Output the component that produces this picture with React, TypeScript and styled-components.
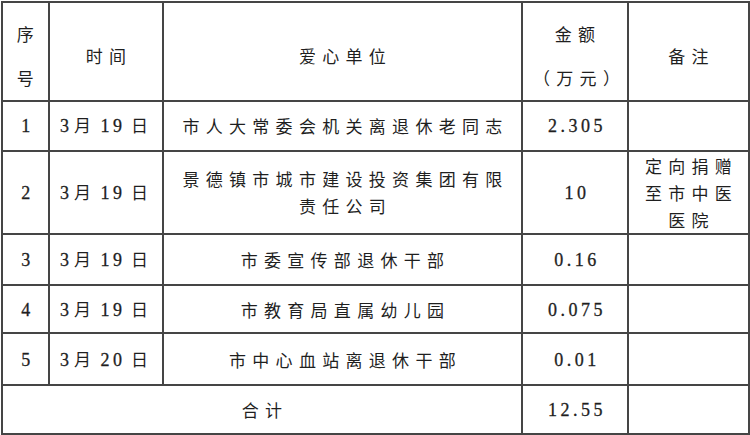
import styled, { createGlobalStyle } from "styled-components";

const GlobalStyle = createGlobalStyle`
  html, body {
    margin: 0;
    padding: 0;
    background: #fff;
  }
`;

const Page = styled.div`
  width: 750px;
  height: 435px;
  padding: 1px 0 0 1px;
  box-sizing: border-box;
  overflow: hidden;
`;

const Table = styled.table`
  border-collapse: collapse;
  table-layout: fixed;
  width: 747px;
  font-family: "Noto Sans CJK SC", sans-serif;
  font-size: 17px;
  color: #1f1f1f;
`;

const Row = styled.tr<{ $h: number }>`
  height: ${(p) => p.$h}px;
`;

const HeadCell = styled.th`
  border: 2px solid #454545;
  padding: 9px 4px 0 10px;
  font-weight: 400;
  line-height: 44px;
  letter-spacing: 6.3px;
  text-align: center;
  vertical-align: middle;
`;

const Cell = styled.td`
  border: 2px solid #454545;
  padding: 0 8px 0 14px;
  line-height: 27px;
  letter-spacing: 6.3px;
  text-align: center;
  vertical-align: middle;
`;

// цифры — засечный шрифт, чуть плотнее
const Num = styled.span<{ $ls?: number }>`
  font-family: "Liberation Serif", "DejaVu Serif", serif;
  font-size: 18px;
  letter-spacing: ${(p) => p.$ls ?? 3.5}px;
  -webkit-text-stroke: 0.3px #1f1f1f;
`;

const Han = styled.span<{ $ls: number }>`
  letter-spacing: ${(p) => p.$ls}px;
`;

const AmountCell = styled(Cell)`
  padding: 0 4px 0 8px;
`;

const NoteCell = styled(Cell)`
  padding: 0 6px 0 12px;
`;

const DateCell = styled(Cell)`
  padding: 0 4px 0 0;
  white-space: nowrap;
  letter-spacing: 0;
`;

interface IDonation {
  no: string;
  day: string;
  unit: string;
  amount: string;
  note?: string;
  h: number;
}

const rows: IDonation[] = [
  { no: "1", day: "19", unit: "市人大常委会机关离退休老同志", amount: "2.305", h: 49.5 },
  {
    no: "2",
    day: "19",
    unit: "景德镇市城市建设投资集团有限责任公司",
    amount: "10",
    note: "定向捐赠至市中医医院",
    h: 83.5,
  },
  { no: "3", day: "19", unit: "市委宣传部退休干部", amount: "0.16", h: 51 },
  { no: "4", day: "19", unit: "市教育局直属幼儿园", amount: "0.075", h: 48 },
  { no: "5", day: "20", unit: "市中心血站离退休干部", amount: "0.01", h: 52 },
];

// "3月19日" — разные промежутки между цифрами и иероглифами
const DateText = ({ day }: { day: string }) => (
  <>
    <Num $ls={5}>3</Num>
    <Han $ls={9.5}>月</Han>
    <Num $ls={3.3}>{day[0]}</Num>
    <Num $ls={9}>{day[1]}</Num>日
  </>
);

export default function App() {
  return (
    <Page>
      <GlobalStyle />
      <Table>
        <colgroup>
          <col style={{ width: 47 }} />
          <col style={{ width: 114 }} />
          <col style={{ width: 359 }} />
          <col style={{ width: 106 }} />
          <col style={{ width: 121 }} />
        </colgroup>
        <thead>
          <Row $h={97}>
            <HeadCell>
              序
              <br />号
            </HeadCell>
            <HeadCell>时间</HeadCell>
            <HeadCell>爱心单位</HeadCell>
            <HeadCell>
              金额
              <br />
              （万元）
            </HeadCell>
            <HeadCell>备注</HeadCell>
          </Row>
        </thead>
        <tbody>
          {rows.map((r) => (
            <Row $h={r.h} key={r.no}>
              <AmountCell>
                <Num>{r.no}</Num>
              </AmountCell>
              <DateCell>
                <DateText day={r.day} />
              </DateCell>
              <Cell>{r.unit}</Cell>
              <AmountCell>
                <Num>{r.amount}</Num>
              </AmountCell>
              <NoteCell>{r.note ?? ""}</NoteCell>
            </Row>
          ))}
          <Row $h={49}>
            <Cell colSpan={3}>合计</Cell>
            <AmountCell>
              <Num>12.55</Num>
            </AmountCell>
            <Cell />
          </Row>
        </tbody>
      </Table>
    </Page>
  );
}
